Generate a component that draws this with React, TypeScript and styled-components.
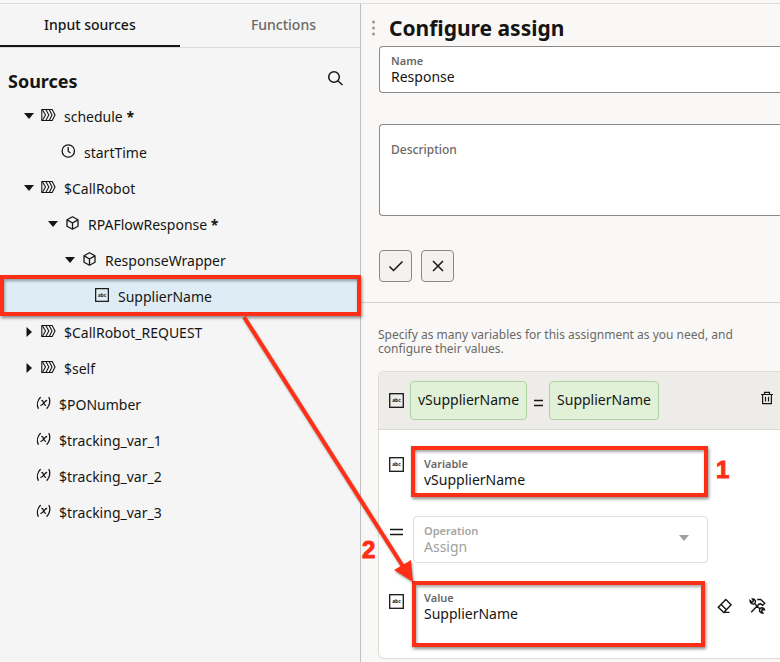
import React from "react";
import styled, { createGlobalStyle, css } from "styled-components";

const red = "#ff2f17";
const ink = "#161513";
const muted = "#6b6966";

const GlobalStyle = createGlobalStyle`
  *, *::before, *::after { box-sizing: border-box; }
  body {
    margin: 0;
    background: #f9f8f7;
    color: ${ink};
    font: 14px/20px "Noto Sans", "Open Sans", sans-serif;
  }
  button, input, select, textarea { font: inherit; color: inherit; }
`;

const Page = styled.div`
  position: relative;
  display: flex;
  min-height: 100vh;
  padding-top: 3px;
  overflow: hidden;
`;

const Sidebar = styled.aside`
  flex: 0 0 361px;
  background: #f5f5f5;
  border-top: 1px solid #dedddb;
  border-right: 1px solid #bfc0c3;
`;

const TabList = styled.div`
  display: flex;
  height: 44px;
  border-bottom: 1px solid #dcdbd9;
`;

const Tab = styled.button<{ $active?: boolean }>`
  padding: 0 44px;
  border: 0;
  border-bottom: 2px solid ${(p) => (p.$active ? ink : "transparent")};
  background: none;
  color: ${(p) => (p.$active ? ink : muted)};
  font-weight: 500;

  & + & {
    margin-left: auto;
  }
`;

const SourcesHeader = styled.div`
  display: flex;
  align-items: center;
  justify-content: space-between;
  height: 51px;
  padding: 15px 16px 0 8px;
`;

const SourcesTitle = styled.h2`
  margin: 0;
  font-size: 18px;
  line-height: 24px;
  font-weight: 700;
`;

const IconButton = styled.button`
  display: inline-flex;
  flex: none;
  padding: 0;
  border: 0;
  background: none;
`;

const SearchButton = styled(IconButton)`
  margin-bottom: 6px;
`;

const Highlight = styled.span`
  position: absolute;
  border: 4px solid ${red};
  box-shadow: 1px 2px 3px rgba(0, 0, 0, 0.45), inset 1px 2px 3px rgba(0, 0, 0, 0.35);
  pointer-events: none;
`;

const RowHighlight = styled(Highlight)`
  inset: -4px -1px -1px 0;
`;

const Tree = styled.ul`
  margin: 0;
  padding: 0;
  list-style: none;
`;

const TreeRow = styled.li<{ $indent: number; $selected?: boolean }>`
  position: relative;
  display: flex;
  align-items: center;
  height: 36px;
  padding-left: ${(p) => p.$indent}px;
  background: ${(p) => (p.$selected ? "#deedf5" : "none")};
`;

const Toggle = styled(IconButton)`
  margin: 0 7px 2px 0;
`;

const TreeIcon = styled.span`
  display: flex;
  width: 16px;
  margin: 0 7px 4px 0;
`;

const Main = styled.main`
  flex: 1;
  min-width: 0;
  border-top: 1px solid #dedddb;
`;

const DetailForm = styled.form`
  padding: 10px 0 20px 18px;
  border-bottom: 1px solid #d3d1ce;
`;

const TitleBar = styled.div`
  display: flex;
  align-items: center;
  gap: 13px;
  height: 32px;
  padding-bottom: 4px;
  margin-left: -8px;
`;

const Title = styled.h1`
  margin: 0;
  font-size: 21px;
  line-height: 28px;
  font-weight: 700;
`;

const Grip = styled.svg`
  display: block;
  flex: none;
`;

const fieldFrame = css`
  position: relative;
  display: flex;
  flex-direction: column;
  border: 1px solid #8b8986;
  background: #fff;
`;

const WideField = styled.div<{ $tall?: boolean }>`
  ${fieldFrame}
  height: ${(p) => (p.$tall ? 92 : 47)}px;
  margin-bottom: ${(p) => (p.$tall ? 34 : 31)}px;
  padding: ${(p) => (p.$tall ? 18 : 7)}px 11px 0;
  border-right: 0;
  border-radius: 4px 0 0 4px;
`;

const Field = styled.div<{ $tall?: boolean; $disabled?: boolean }>`
  ${fieldFrame}
  flex: 1;
  max-width: ${(p) => (p.$tall ? 291 : 295)}px;
  height: ${(p) => (p.$tall ? 62 : 47)}px;
  padding: 7px 10px 0;
  border-color: ${(p) => (p.$disabled ? "#dedddb" : "#8b8986")};
  border-radius: 4px;
  color: ${(p) => (p.$disabled ? "#a09f9d" : ink)};
`;

const Label = styled.label<{ $disabled?: boolean }>`
  color: ${(p) => (p.$disabled ? "#a5a4a2" : muted)};
  font-size: 11px;
  line-height: 14px;
  font-weight: 600;
`;

const DescriptionLabel = styled(Label)`
  font-size: 12px;
  font-weight: 500;
`;

const control = css`
  width: 100%;
  padding: 0;
  border: 0;
  outline: 0;
  background: none;
  line-height: 18px;
`;

const Input = styled.input`
  ${control}
  height: 18px;
`;

const TextArea = styled.textarea`
  ${control}
  flex: 1;
  resize: none;
`;

const Select = styled.select`
  ${control}
  height: 18px;
  appearance: none;
  opacity: 1;
`;

const SelectArrow = styled.svg`
  position: absolute;
  top: 18px;
  right: 18px;
  pointer-events: none;
`;

const Actions = styled.div`
  display: flex;
  gap: 9px;
`;

const ActionButton = styled.button`
  display: grid;
  place-items: center;
  width: 33px;
  height: 32px;
  padding: 0;
  border: 1px solid #8b8986;
  border-radius: 4px;
  background: #f3f2f1;
`;

const Assignments = styled.section`
  padding: 25px 0 0 17px;
`;

const Hint = styled.p`
  max-width: 370px;
  margin: 0 0 15px;
  color: ${muted};
  font-size: 12px;
  line-height: 14px;
`;

const Card = styled.div`
  border: 1px solid #dedcd6;
  border-right: 0;
  border-radius: 6px 0 0 6px;
  background: #fff;
  overflow: hidden;
`;

const CardHeader = styled.div`
  display: flex;
  align-items: center;
  height: 58px;
  padding: 0 6px 0 10px;
  border-bottom: 1px solid #dad8d3;
  background: #eeece8;
`;

const Chip = styled.span`
  height: 39px;
  padding: 0 7px;
  border: 1px solid #aed3a0;
  border-radius: 4px;
  background: #e1f1d8;
  line-height: 36px;
`;

const ChipEquals = styled.span`
  display: flex;
  margin: 4px 6px 0;
`;

const TrashButton = styled(IconButton)`
  margin: 0 0 5px auto;
`;

const CardBody = styled.div`
  display: flex;
  flex-direction: column;
  gap: 20px;
  padding: 19px 8px 13px 10px;
`;

const FormRow = styled.div`
  display: flex;
  align-items: flex-start;
`;

const RowIcon = styled.span<{ $low?: boolean }>`
  display: flex;
  flex: none;
  width: 24px;
  padding-top: ${(p) => (p.$low ? 11 : 8)}px;
`;

const ChipIcon = styled.span`
  display: flex;
  margin-right: 6px;
`;

const VariableHighlight = styled(Highlight)`
  inset: -4px -1px -2px -3px;
`;

const ValueHighlight = styled(Highlight)`
  inset: -3px -2px -3px -2px;
`;

const RowTools = styled.span`
  display: flex;
  gap: 16px;
  padding: 15px 0 0 13px;
`;

const StepNumber = styled.b`
  padding: 9px 0 0 8px;
  color: ${red};
  font: 700 24px/24px "Liberation Sans", sans-serif;
  -webkit-text-stroke: 1px ${red};
`;

const Arrow = styled.svg`
  position: absolute;
  top: 0;
  left: 0;
  overflow: visible;
  pointer-events: none;
  filter: drop-shadow(1px 2px 1px rgba(0, 0, 0, 0.35));
`;

const ArrowNumber = styled.b`
  position: absolute;
  top: 538px;
  left: 362px;
  color: ${red};
  font: 700 24px/24px "Liberation Sans", sans-serif;
  -webkit-text-stroke: 1px ${red};
`;

const Caret = ({ open }: { open: boolean }) => (
  <svg width="10" height="10" viewBox="0 0 10 10" aria-hidden="true">
    <path d={open ? "M0 2h10L5 8z" : "M2.5 0v10L8 5z"} fill={ink} />
  </svg>
);

const FlowIcon = () => (
  <svg width="16" height="14" viewBox="0 0 16 14" fill="none" stroke={ink} strokeWidth="1.1" aria-hidden="true">
    <path d="M.8 1.500h10.400L14 7l-2.800 5.500H.8z" />
    <path d="M1.500 1.800 4.500 7l-3 5.200M5 1.800 7.800 7 5 12.200M8.300 1.800 11 7l-2.700 5.200" />
  </svg>
);

const ClockIcon = () => (
  <svg width="16" height="14" viewBox="0 0 16 14" fill="none" stroke={ink} strokeWidth="1.3" aria-hidden="true">
    <circle cx="7.3" cy="7" r="6.2" />
    <path d="M7.2 3v4.2l2.3 1.7" />
  </svg>
);

const CubeIcon = () => (
  <svg width="16" height="14" viewBox="0 0 16 14" fill="none" stroke={ink} strokeWidth="1.3" strokeLinejoin="round" aria-hidden="true">
    <path d="M7.5.8 13 3.7v6.6l-5.5 2.9L2 10.3V3.7z" />
    <path d="M2.2 3.9 7.5 7l5.3-3.1M7.5 7v6" />
  </svg>
);

const AbcIcon = ({ size = 14 }: { size?: number }) => (
  <svg width={size} height={size} viewBox="0 0 15 15" aria-hidden="true">
    <rect x="0.7" y="0.7" width="13.6" height="13.6" fill="none" stroke={ink} strokeWidth="1.3" />
    <text x="7.5" y="9.3" textAnchor="middle" fontFamily="Noto Sans, sans-serif" fontSize="5" fontWeight="700" fill={ink}>
      abc
    </text>
  </svg>
);

const VariableIcon = () => (
  <svg width="16" height="14" viewBox="0 0 16 14" fill="none" stroke={ink} strokeWidth="1.3" strokeLinecap="round" aria-hidden="true">
    <path d="M4.300 1.500C1.500 4.200.7 8.800 2.200 12.300M13 1.500c1.700 3.400.6 8-2 10.800" />
    <path d="M5.900 4.500c1.800-.3 1.700 4.900 3.700 4.900M10.600 4.500C9 4.700 6.700 9.200 4.900 9.400" />
  </svg>
);

const EqualsIcon = ({ size = 14 }: { size?: number }) => (
  <svg width={size} height="15" viewBox={`0 0 ${size} 15`} aria-hidden="true">
    <path d={`M1 5.500h${size - 1}M1 10.500h${size - 1}`} stroke={ink} strokeWidth="1.4" />
  </svg>
);

const SearchIcon = () => (
  <svg width="17" height="17" viewBox="0 0 17 17" fill="none" stroke={ink} strokeWidth="1.5" aria-hidden="true">
    <circle cx="7" cy="7" r="5.3" />
    <path d="m10.800 10.800 4.700 4.200" />
  </svg>
);

const CheckIcon = () => (
  <svg width="16" height="14" viewBox="0 0 16 14" fill="none" stroke={ink} strokeWidth="1.5" aria-hidden="true">
    <path d="m1.500 7.500 4 4 9-9" />
  </svg>
);

const CloseIcon = () => (
  <svg width="14" height="14" viewBox="0 0 14 14" fill="none" stroke={ink} strokeWidth="1.5" aria-hidden="true">
    <path d="m2 2 10 10M12 2 2 12" />
  </svg>
);

const TrashIcon = () => (
  <svg width="14" height="14" viewBox="0 0 14 14" fill="none" stroke={ink} strokeWidth="1.2" aria-hidden="true">
    <path d="M1 3.500h12M4.500 3.300V1.300h5v2M2.600 3.500v9.200h8.800V3.500M5.500 5.800v4.700M8.500 5.800v4.700" />
  </svg>
);

const EraserIcon = () => (
  <svg width="16" height="16" viewBox="0 0 16 16" fill="none" stroke={ink} strokeWidth="1.4" aria-hidden="true">
    <path d="M1.300 9.300 8.800 1.500l5.300 5.300-7.300 7.700zM4.200 6.500l5.200 5.200M6.500 14.400h6" />
  </svg>
);

const ToolsIcon = () => (
  <svg width="17" height="16" viewBox="0 0 17 16" fill="none" stroke={ink} strokeWidth="1.4" aria-hidden="true">
    <path d="M2.200 14.200 10.500 5.500M8.200 1.500h3.500l4 3.800-2.200 2-2-1.700-1.300 1M6 6l5 5" />
    <path d="M1 2.500l2.300 1.700L4.500 3 3.300.9C5.700.8 7.200 2.700 6 5.200 4 6.900 1 5.500 1 2.500zM11.200 10.400c1.700-1.200 3.800-.4 4.300 1.400l-2.300-.2-.7 1.500 1.500 1.900c-2.500.5-4.500-1.800-2.800-4.600z" />
  </svg>
);

type Kind = "flow" | "clock" | "cube" | "abc" | "variable";

const icons: Record<Kind, React.ReactNode> = {
  flow: <FlowIcon />,
  clock: <ClockIcon />,
  cube: <CubeIcon />,
  abc: <AbcIcon />,
  variable: <VariableIcon />,
};

type Source = {
  name: string;
  kind: Kind;
  indent: number;
  level: number;
  open?: boolean;
  required?: boolean;
  selected?: boolean;
};

const sources: Source[] = [
  { name: "schedule", kind: "flow", indent: 24, level: 1, open: true, required: true },
  { name: "startTime", kind: "clock", indent: 61, level: 2 },
  { name: "$CallRobot", kind: "flow", indent: 24, level: 1, open: true },
  { name: "RPAFlowResponse", kind: "cube", indent: 48, level: 2, open: true, required: true },
  { name: "ResponseWrapper", kind: "cube", indent: 65, level: 3, open: true },
  { name: "SupplierName", kind: "abc", indent: 95, level: 4, selected: true },
  { name: "$CallRobot_REQUEST", kind: "flow", indent: 24, level: 1, open: false },
  { name: "$self", kind: "flow", indent: 24, level: 1, open: false },
  { name: "$PONumber", kind: "variable", indent: 36, level: 1 },
  { name: "$tracking_var_1", kind: "variable", indent: 36, level: 1 },
  { name: "$tracking_var_2", kind: "variable", indent: 36, level: 1 },
  { name: "$tracking_var_3", kind: "variable", indent: 36, level: 1 },
];

export default function App() {
  return (
    <Page>
      <GlobalStyle />
      <Sidebar>
        <TabList role="tablist">
          <Tab type="button" role="tab" aria-selected="true" $active>
            Input sources
          </Tab>
          <Tab type="button" role="tab" aria-selected="false">
            Functions
          </Tab>
        </TabList>
        <SourcesHeader>
          <SourcesTitle>Sources</SourcesTitle>
          <SearchButton type="button" aria-label="Search">
            <SearchIcon />
          </SearchButton>
        </SourcesHeader>
        <Tree role="tree">
          {sources.map((s) => (
            <TreeRow
              key={s.name}
              role="treeitem"
              aria-level={s.level}
              aria-expanded={s.open}
              aria-selected={!!s.selected}
              $indent={s.indent}
              $selected={s.selected}
            >
              {s.open !== undefined && (
                <Toggle type="button" aria-label={`Toggle ${s.name}`}>
                  <Caret open={s.open} />
                </Toggle>
              )}
              <TreeIcon>{icons[s.kind]}</TreeIcon>
              <span>
                {s.name}
                {s.required && <b> *</b>}
              </span>
              {s.selected && <RowHighlight />}
            </TreeRow>
          ))}
        </Tree>
      </Sidebar>

      <Main>
        <DetailForm>
          <TitleBar>
            <Grip width="5" height="16" viewBox="0 0 5 16" fill="#9b9997" aria-hidden="true">
              <circle cx="2.5" cy="2" r="1.500" />
              <circle cx="2.5" cy="8" r="1.500" />
              <circle cx="2.5" cy="14" r="1.500" />
            </Grip>
            <Title>Configure assign</Title>
          </TitleBar>
          <WideField>
            <Label htmlFor="name">Name</Label>
            <Input id="name" defaultValue="Response" />
          </WideField>
          <WideField $tall>
            <DescriptionLabel htmlFor="description">Description</DescriptionLabel>
            <TextArea id="description" />
          </WideField>
          <Actions>
            <ActionButton type="button" aria-label="Apply">
              <CheckIcon />
            </ActionButton>
            <ActionButton type="button" aria-label="Cancel">
              <CloseIcon />
            </ActionButton>
          </Actions>
        </DetailForm>

        <Assignments>
          <Hint>Specify as many variables for this assignment as you need, and configure their values.</Hint>
          <Card>
            <CardHeader>
              <ChipIcon>
                <AbcIcon size={15} />
              </ChipIcon>
              <Chip>vSupplierName</Chip>
              <ChipEquals>
                <EqualsIcon size={10} />
              </ChipEquals>
              <Chip>SupplierName</Chip>
              <TrashButton type="button" aria-label="Delete assignment">
                <TrashIcon />
              </TrashButton>
            </CardHeader>
            <CardBody>
              <FormRow>
                <RowIcon>
                  <AbcIcon size={15} />
                </RowIcon>
                <Field>
                  <Label htmlFor="variable">Variable</Label>
                  <Input id="variable" defaultValue="vSupplierName" />
                  <VariableHighlight />
                </Field>
                <StepNumber>1</StepNumber>
              </FormRow>
              <FormRow>
                <RowIcon>
                  <EqualsIcon />
                </RowIcon>
                <Field $disabled>
                  <Label htmlFor="operation" $disabled>
                    Operation
                  </Label>
                  <Select id="operation" disabled defaultValue="Assign">
                    <option>Assign</option>
                  </Select>
                  <SelectArrow width="10" height="6" viewBox="0 0 10 6" aria-hidden="true">
                    <path d="M0 0h10L5 6z" fill="#a09f9d" />
                  </SelectArrow>
                </Field>
              </FormRow>
              <FormRow>
                <RowIcon $low>
                  <AbcIcon size={15} />
                </RowIcon>
                <Field $tall>
                  <Label htmlFor="value">Value</Label>
                  <Input id="value" defaultValue="SupplierName" />
                  <ValueHighlight />
                </Field>
                <RowTools>
                  <IconButton type="button" aria-label="Clear value">
                    <EraserIcon />
                  </IconButton>
                  <IconButton type="button" aria-label="Configure value">
                    <ToolsIcon />
                  </IconButton>
                </RowTools>
              </FormRow>
            </CardBody>
          </Card>
        </Assignments>
      </Main>

      <Arrow width="780" height="662" viewBox="0 0 780 662" aria-hidden="true">
        <path d="M244 317 404 568" stroke={red} strokeWidth="4" />
        <path d="m413 582-19-12 17-10z" fill={red} />
      </Arrow>
      <ArrowNumber>2</ArrowNumber>
    </Page>
  );
}
